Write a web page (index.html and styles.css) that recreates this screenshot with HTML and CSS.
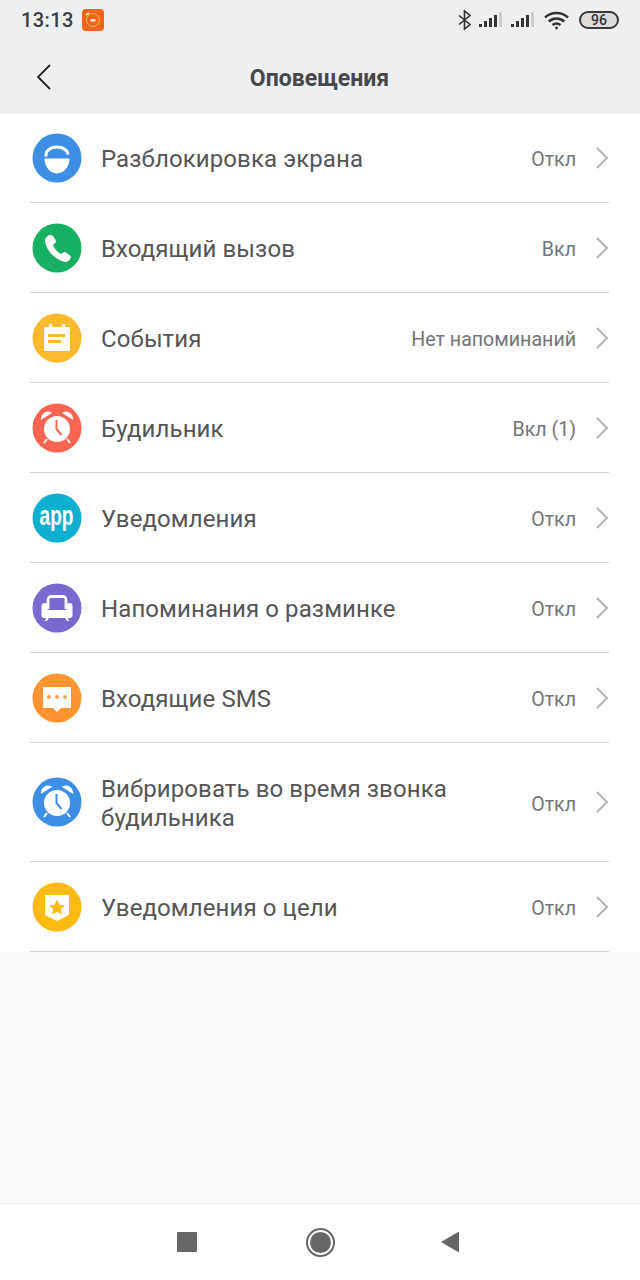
FILE: index.html
```html
<!DOCTYPE html>
<html lang="ru">
<head>
  <meta charset="UTF-8" />
  <meta name="viewport" content="width=device-width, initial-scale=1.0"/>
  <title>Оповещения</title>
  <link rel="stylesheet" href="styles.css">
</head>
<body>
  <div class="top">
    <div class="status">
      <span class="time">13:13</span>
      <svg class="app-badge" width="22" height="22" viewBox="0 0 22 22">
        <rect width="22" height="22" rx="4" fill="#f26419"/>
        <circle cx="11" cy="11" r="6.500" fill="none" stroke="#fbb45f" stroke-width="1"/>
        <path d="M4 6l3-2" stroke="#ffe9a8" stroke-width="2"/>
        <rect x="8.500" y="10" width="5" height="2.500" fill="#fde3c8"/>
      </svg>
      <span class="status-right">
        <svg width="14" height="20" viewBox="0 0 14 20" fill="none" stroke="#333" stroke-width="1.600">
          <path d="M1 5.500l11 9-5.500 4.500V1l5.500 4.500-11 9"/>
        </svg>
        <svg class="signal signal-first" width="24" height="18" viewBox="0 0 24 18">
          <rect x="0" y="13" width="3" height="3" fill="#333"/>
          <rect x="5" y="10" width="3" height="6" fill="#333"/>
          <rect x="10" y="7" width="3" height="9" fill="#333"/>
          <rect x="15" y="4" width="3" height="12" fill="#333"/>
          <rect x="20" y="1" width="3" height="15" fill="#ccc"/>
        </svg>
        <svg class="signal" width="24" height="18" viewBox="0 0 24 18">
          <rect x="0" y="13" width="3" height="3" fill="#333"/>
          <rect x="5" y="10" width="3" height="6" fill="#333"/>
          <rect x="10" y="7" width="3" height="9" fill="#333"/>
          <rect x="15" y="4" width="3" height="12" fill="#333"/>
          <rect x="20" y="1" width="3" height="15" fill="#ccc"/>
        </svg>
        <svg class="wifi" width="25" height="19" viewBox="0 0 25 19" fill="none" stroke="#333" stroke-width="2.400">
          <path d="M1 6.500c6.500-6 16.500-6 23 0"/>
          <path d="M4.800 10.500c4.500-4 10.900-4 15.400 0"/>
          <path d="M8.500 14c2.500-2 5.500-2 8 0"/>
          <circle cx="12.500" cy="17" r="1.400" fill="#333" stroke="none"/>
        </svg>
        <span class="battery"><span class="battery-num">96</span></span>
      </span>
    </div>
    <div class="titlebar">
      <svg class="back" width="16" height="26" viewBox="0 0 16 26" fill="none" stroke="#222" stroke-width="1.800">
        <path d="M14 1L2 13l12 12"/>
      </svg>
      <h1>Оповещения</h1>
    </div>
  </div>

  <ul class="list">
    <li class="row">
      <svg class="icon" viewBox="0 0 50 50">
        <circle cx="25" cy="25" r="24.500" fill="#3d8fe4"/>
        <path d="M12.500 25.500h25a12.500 15 0 0 1-25 0z" fill="#fff"/>
        <path d="M14 23.500v-2a11 7.500 0 0 1 22 0" fill="none" stroke="#fff" stroke-width="3"/>
      </svg>
      <span class="name">Разблокировка экрана</span>
      <span class="val">Откл</span>
      <svg class="chev" width="14" height="22" viewBox="0 0 14 22"><path d="M2 1l10 10L2 21" /></svg>
    </li>
    <li class="row">
      <svg class="icon" viewBox="0 0 50 50">
        <circle cx="25" cy="25" r="24.500" fill="#17b062"/>
        <path d="M17 12c-2 1-4 3-4 6 1 9 10 19 20 21 3 0 5-2 6-5 0-1-5-5-7-5l-3 2c-3-1-7-6-8-9l3-3c0-2-3-7-5-7z" fill="#fff"/>
      </svg>
      <span class="name">Входящий вызов</span>
      <span class="val">Вкл</span>
      <svg class="chev" width="14" height="22" viewBox="0 0 14 22"><path d="M2 1l10 10L2 21" /></svg>
    </li>
    <li class="row">
      <svg class="icon" viewBox="0 0 50 50">
        <circle cx="25" cy="25" r="24.500" fill="#fdb92e"/>
        <path d="M13 14h4v-3h3v3h10v-3h3v3h4a1 1 0 0 1 1 1v22a1 1 0 0 1-1 1H13a1 1 0 0 1-1-1V15a1 1 0 0 1 1-1z" fill="#fff"/>
        <rect x="16" y="21" width="17" height="3" fill="#fdb92e"/>
        <rect x="16" y="27" width="13" height="3" fill="#fdb92e"/>
      </svg>
      <span class="name">События</span>
      <span class="val">Нет напоминаний</span>
      <svg class="chev" width="14" height="22" viewBox="0 0 14 22"><path d="M2 1l10 10L2 21" /></svg>
    </li>
    <li class="row">
      <svg class="icon" viewBox="0 0 50 50">
        <circle cx="25" cy="25" r="24.500" fill="#fb6450"/>
        <circle cx="25" cy="26" r="13" fill="#fff"/>
        <path d="M10 15a6 6 0 0 1 8-5zM40 15a6 6 0 0 0-8-5zM15 36l-3 4M35 36l3 4" fill="#fff" stroke="#fff" stroke-width="2"/>
        <path d="M24.500 17v9l5 6" fill="none" stroke="#fb6450" stroke-width="2"/>
      </svg>
      <span class="name">Будильник</span>
      <span class="val">Вкл (1)</span>
      <svg class="chev" width="14" height="22" viewBox="0 0 14 22"><path d="M2 1l10 10L2 21" /></svg>
    </li>
    <li class="row">
      <svg class="icon" viewBox="0 0 50 50">
        <circle cx="25" cy="25" r="24.500" fill="#0fb0cf"/>
        <text class="app-text" transform="translate(24.500 32) scale(.68 1)" text-anchor="middle">app</text>
      </svg>
      <span class="name">Уведомления</span>
      <span class="val">Откл</span>
      <svg class="chev" width="14" height="22" viewBox="0 0 14 22"><path d="M2 1l10 10L2 21" /></svg>
    </li>
    <li class="row">
      <svg class="icon" viewBox="0 0 50 50">
        <circle cx="25" cy="25" r="24.500" fill="#7b68cf"/>
        <path d="M16 26v-9.500a3 3 0 0 1 3-3h12a3 3 0 0 1 3 3v9.500" fill="none" stroke="#fff" stroke-width="2.800"/>
        <path d="M9.500 23a3 3 0 0 1 6 0v4h19v-4a3 3 0 0 1 6 0v9a3 3 0 0 1-3 3h-25a3 3 0 0 1-3-3z" fill="#fff"/>
        <path d="M14 35l-1 3h2l2-3zM36 35l1 3h-2l-2-3z" fill="#fff"/>
      </svg>
      <span class="name">Напоминания о разминке</span>
      <span class="val">Откл</span>
      <svg class="chev" width="14" height="22" viewBox="0 0 14 22"><path d="M2 1l10 10L2 21" /></svg>
    </li>
    <li class="row">
      <svg class="icon" viewBox="0 0 50 50">
        <circle cx="25" cy="25" r="24.500" fill="#ff9430"/>
        <path d="M11 14h28v21H29l-4 4-4-4H11z" fill="#fff"/>
        <circle cx="17" cy="24" r="2" fill="#f6a55b"/>
        <circle cx="25" cy="24" r="2" fill="#f6a55b"/>
        <circle cx="33" cy="24" r="2" fill="#f6a55b"/>
      </svg>
      <span class="name">Входящие SMS</span>
      <span class="val">Откл</span>
      <svg class="chev" width="14" height="22" viewBox="0 0 14 22"><path d="M2 1l10 10L2 21" /></svg>
    </li>
    <li class="row row-tall">
      <svg class="icon" viewBox="0 0 50 50">
        <circle cx="25" cy="25" r="24.500" fill="#3d8fe4"/>
        <circle cx="25" cy="26" r="13" fill="#fff"/>
        <path d="M10 15a6 6 0 0 1 8-5zM40 15a6 6 0 0 0-8-5zM15 36l-3 4M35 36l3 4" fill="#fff" stroke="#fff" stroke-width="2"/>
        <path d="M24.500 17v9l5 6" fill="none" stroke="#3d8fe4" stroke-width="2"/>
      </svg>
      <span class="name">Вибрировать во время звонка будильника</span>
      <span class="val">Откл</span>
      <svg class="chev" width="14" height="22" viewBox="0 0 14 22"><path d="M2 1l10 10L2 21" /></svg>
    </li>
    <li class="row">
      <svg class="icon" viewBox="0 0 50 50">
        <circle cx="25" cy="25" r="24.500" fill="#fdbb11"/>
        <path d="M13 13h24v20l-12 6-12-6z" fill="#fff"/>
        <path d="M25 17.500l2.400 5.200 5.600.6-4.200 3.800 1.200 5.600-5-2.900-5 2.900 1.200-5.600-4.200-3.800 5.600-.6z" fill="#fdbb11"/>
      </svg>
      <span class="name">Уведомления о цели</span>
      <span class="val">Откл</span>
      <svg class="chev" width="14" height="22" viewBox="0 0 14 22"><path d="M2 1l10 10L2 21" /></svg>
    </li>
  </ul>

  <div class="spacer"></div>

  <div class="navbar">
    <span class="nav-square"></span>
    <span class="nav-home"></span>
    <svg width="20" height="22" viewBox="0 0 20 22"><path d="M19 0.500v21L1 11z" fill="#666"/></svg>
  </div>
</body>
</html>
```

FILE: styles.css
```css
* {
  box-sizing: border-box;
}
html, body {
  height: 100%;
}
body {
  margin: 0;
  font-family: Roboto, 'Noto Sans', sans-serif;
  color: #4a4a4a;
  background: #fafafa;
  display: flex;
  flex-direction: column;
}
.top {
  height: 114px;
  background: #eeeff1;
}
.status {
  height: 40px;
  padding: 0 21px 0 21px;
  display: flex;
  align-items: center;
}
.time {
  font-size: 20px;
  font-weight: 500;
  letter-spacing: 0.4px;
  color: #3b3e44;
}
.app-badge {
  margin-left: 8px;
}
.status-right {
  margin-left: auto;
  display: flex;
  align-items: center;
}
.signal {
  margin-left: 8px;
}
.signal-first {
  margin-left: 7px;
}
.wifi {
  margin-left: 9px;
}
.battery {
  width: 40px;
  height: 18px;
  margin-left: 10px;
  border: 2px solid #3a3a3a;
  border-radius: 9px;
  background: #dcdcdc;
  display: flex;
  align-items: center;
  justify-content: center;
}
.battery-num {
  font-size: 14px;
  font-weight: 500;
  color: #333;
}
.titlebar {
  height: 74px;
  position: relative;
  display: flex;
  align-items: center;
  justify-content: center;
}
.titlebar h1 {
  margin: 0 0 0 -1px;
  padding-top: 2px;
  font-size: 23px;
  font-weight: 700;
  color: #46484b;
}
.back {
  position: absolute;
  left: 36px;
  top: 24px;
}
.list {
  margin: 0;
  padding: 0;
  list-style: none;
  background: #fff;
}
.row {
  height: 90px;
  margin: 0 31px 0 30px;
  border-bottom: 1px solid #d2d2d2;
  display: flex;
  align-items: center;
}
.row:first-child {
  height: 89px;
  padding-bottom: 1px;
}
.row-tall {
  height: 119px;
}
.icon {
  width: 50px;
  height: 50px;
  margin: 0 19px 0 2px;
  flex: none;
}
.name {
  flex: 1;
  padding-top: 4px;
  font-size: 24px;
  line-height: 29px;
  letter-spacing: 0.1px;
  color: #555;
}
.val {
  margin-left: 16px;
  padding-top: 4px;
  font-size: 19.600px;
  color: #757575;
  white-space: nowrap;
}
.chev {
  flex: none;
  margin-left: 19px;
}
.chev path {
  fill: none;
  stroke: #b4b4b4;
  stroke-width: 2;
}
.app-text {
  font-family: 'Liberation Sans', sans-serif;
  font-size: 28px;
  font-weight: 700;
  fill: #fff;
}
.spacer {
  flex: 1;
}
.navbar {
  height: 77px;
  background: #fff;
  border-top: 1px solid #ececec;
  padding: 0 180px 0 177px;
  display: flex;
  align-items: center;
  justify-content: space-between;
}
.nav-square {
  width: 20px;
  height: 20px;
  background: #666;
  border-radius: 1px;
}
.nav-home {
  width: 29px;
  height: 29px;
  margin-left: 4px;
  border: 2.500px solid #666;
  border-radius: 50%;
  padding: 2px;
  background: #666 content-box;
}
```
